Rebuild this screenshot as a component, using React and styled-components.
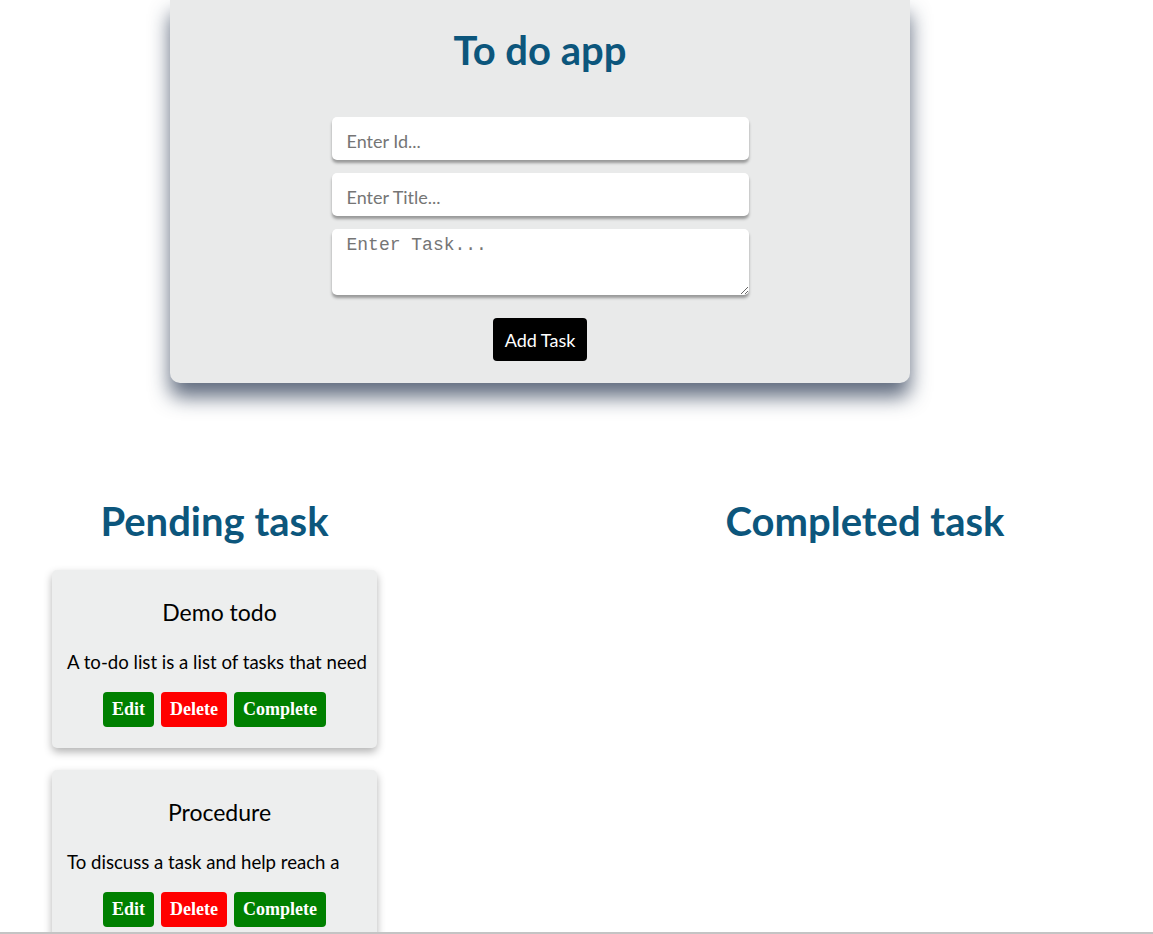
import React from "react";
import styled, { createGlobalStyle } from "styled-components";

const GlobalStyle = createGlobalStyle`
  body {
    margin: 0;
    background: #ffffff;
    font-family: "Lato", "Open Sans", sans-serif;
  }
`;

const tasks = [
  { id: 1, title: "Demo todo", text: "A to-do list is a list of tasks that need" },
  { id: 2, title: "Procedure", text: "To discuss a task and help reach a" },
];

const App = () => {
  return (
    <Page>
      <GlobalStyle />
      <FormCard>
        <Title>To do app</Title>
        <Field placeholder="Enter Id..." />
        <Field placeholder="Enter Title..." />
        <TaskArea placeholder="Enter Task..." />
        <AddButton>Add Task</AddButton>
      </FormCard>
      <Columns>
        <Column>
          <Heading>Pending task</Heading>
          {tasks.map((t) => (
            <TaskCard key={t.id}>
              <TaskTitle>{t.title}</TaskTitle>
              <TaskText>{t.text}</TaskText>
              <Actions>
                <ActionButton color="#008000">Edit</ActionButton>
                <ActionButton color="#ff0000">Delete</ActionButton>
                <ActionButton color="#008000">Complete</ActionButton>
              </Actions>
            </TaskCard>
          ))}
        </Column>
        <DoneColumn>
          <Heading>Completed task</Heading>
        </DoneColumn>
      </Columns>
      <BottomEdge />
    </Page>
  );
};

const Page = styled.div`
  width: 1080px;
`;

const FormCard = styled.div`
  width: 740px;
  margin: 0 auto;
  box-sizing: border-box;
  background-color: #e9eaea;
  border-radius: 0 0 10px 10px;
  box-shadow: 0 14px 20px rgba(30, 45, 72, 0.7);
  padding: 28px 0 22px;
  display: flex;
  flex-direction: column;
  align-items: center;
`;

const Title = styled.h1`
  margin: 0 0 45px;
  font-size: 40px;
  line-height: 44px;
  font-weight: 700;
  color: #0c567c;
`;

const Field = styled.input`
  width: 417px;
  height: 43px;
  box-sizing: border-box;
  border: none;
  border-radius: 5px;
  padding: 4px 15px 0;
  margin-bottom: 13px;
  font-family: "Lato", sans-serif;
  font-size: 18px;
  background: #ffffff;
  box-shadow: 0 3px 3px rgba(0, 0, 0, 0.35);
  outline: none;
  &::placeholder {
    color: #757575;
  }
`;

const TaskArea = styled.textarea`
  width: 417px;
  height: 66px;
  box-sizing: border-box;
  border: none;
  border-radius: 5px;
  padding: 6px 15px;
  font-family: "Liberation Mono", monospace;
  font-size: 18px;
  background: #ffffff;
  box-shadow: 0 3px 3px rgba(0, 0, 0, 0.35);
  outline: none;
  &::placeholder {
    color: #757575;
  }
`;

const AddButton = styled.button`
  margin-top: 23px;
  height: 43px;
  padding: 0 12px;
  border: none;
  border-radius: 4px;
  background: #000000;
  color: #ffffff;
  font-family: "Lato", sans-serif;
  font-size: 18px;
`;

const Columns = styled.div`
  display: flex;
  padding: 116px 0 0 52px;
`;

const Column = styled.div`
  width: 325px;
  display: flex;
  flex-direction: column;
  gap: 22px;
`;

const DoneColumn = styled(Column)`
  width: 400px;
  margin-left: 288px;
`;

const Heading = styled.h2`
  margin: 0 0 5px;
  text-align: center;
  font-size: 40px;
  line-height: 44px;
  font-weight: 700;
  color: #0c567c;
`;

const TaskCard = styled.div`
  background-color: #edeeee;
  border-radius: 5px;
  box-shadow: 0 4px 8px rgba(0, 0, 0, 0.3);
  padding: 27px 5px 21px 15px;
`;

const TaskTitle = styled.div`
  text-align: center;
  font-size: 23px;
  line-height: 30px;
  color: #000000;
`;

const TaskText = styled.p`
  margin: 23px 0 18px;
  white-space: nowrap;
  font-size: 18.6px;
  line-height: 24px;
  color: #000000;
`;

const Actions = styled.div`
  display: flex;
  justify-content: center;
  gap: 7px;
  padding-right: 10px;
`;

const ActionButton = styled.button`
  height: 35px;
  padding: 0 9px;
  border: none;
  border-radius: 4px;
  background-color: ${(p) => p.color};
  color: #ffffff;
  font-family: "Liberation Serif", serif;
  font-weight: 700;
  font-size: 18px;
`;

const BottomEdge = styled.div`
  position: fixed;
  left: 0;
  right: 0;
  bottom: 0;
  height: 2px;
  background: #c4c4c4;
`;

export default App;
